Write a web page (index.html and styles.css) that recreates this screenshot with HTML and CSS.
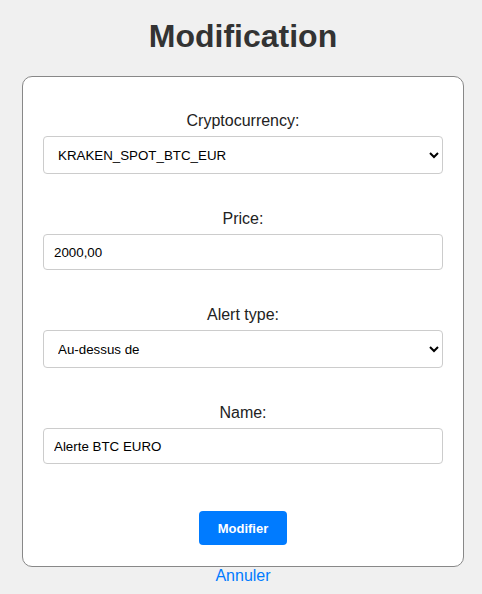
FILE: index.html
```html
<!DOCTYPE html>
<html lang="fr">
<head>
<meta charset="utf-8">
<title>Modification</title>
<link rel="stylesheet" href="styles.css">
</head>
<body>
<div class="page">
  <h1 class="title">Modification</h1>
  <form class="card">
    <div class="group">
      <label class="label" for="crypto">Cryptocurrency:</label>
      <select class="field select" id="crypto">
        <option>KRAKEN_SPOT_BTC_EUR</option>
      </select>
    </div>
    <div class="group">
      <label class="label" for="price">Price:</label>
      <input class="field input" id="price" type="text" value="2000,00">
    </div>
    <div class="group">
      <label class="label" for="type">Alert type:</label>
      <select class="field select" id="type">
        <option>Au-dessus de</option>
      </select>
    </div>
    <div class="group group-last">
      <label class="label" for="name">Name:</label>
      <input class="field input" id="name" type="text" value="Alerte BTC EURO">
    </div>
    <div class="actions">
      <button class="btn" type="button">Modifier</button>
    </div>
  </form>
  <a class="cancel" href="#">Annuler</a>
</div>
</body>
</html>
```

FILE: styles.css
```css
html, body {
  margin: 0;
  padding: 0;
  background: #f0f0f0;
  font-family: "Liberation Sans", Arial, sans-serif;
}

.page {
  width: 442px;
  margin-left: 22px;
  display: flex;
  flex-direction: column;
}

.title {
  margin: 18px 0 21px;
  font-size: 32px;
  line-height: 37px;
  font-weight: bold;
  color: #333;
  text-align: center;
}

.card {
  box-sizing: border-box;
  width: 442px;
  background: #fff;
  border: 1px solid #888;
  border-radius: 10px;
  padding: 35px 20px 21px;
  display: flex;
  flex-direction: column;
}

.group {
  display: flex;
  flex-direction: column;
  margin-bottom: 36px;
}

.group-last {
  margin-bottom: 47px;
}

.label {
  display: block;
  font-size: 16px;
  line-height: 18px;
  color: #222;
  text-align: center;
  margin-bottom: 6px;
}

.field {
  box-sizing: border-box;
  width: 400px;
  border: 1px solid #ccc;
  border-radius: 4px;
  background: #fff;
  font-family: "Liberation Sans", Arial, sans-serif;
  font-size: 13.33px;
  color: #000;
  padding: 0 10px;
  margin: 0;
}

.select {
  height: 38px;
}

.input {
  height: 36px;
}

.actions {
  display: flex;
  justify-content: center;
}

.btn {
  width: 88px;
  height: 34px;
  border: none;
  border-radius: 4px;
  background: #007bff;
  color: #fff;
  font-family: "Liberation Sans", Arial, sans-serif;
  font-size: 13px;
  font-weight: bold;
  padding: 0;
}

.cancel {
  display: block;
  text-align: center;
  font-size: 16px;
  line-height: 18px;
  color: #007bff;
  text-decoration: none;
}
```
